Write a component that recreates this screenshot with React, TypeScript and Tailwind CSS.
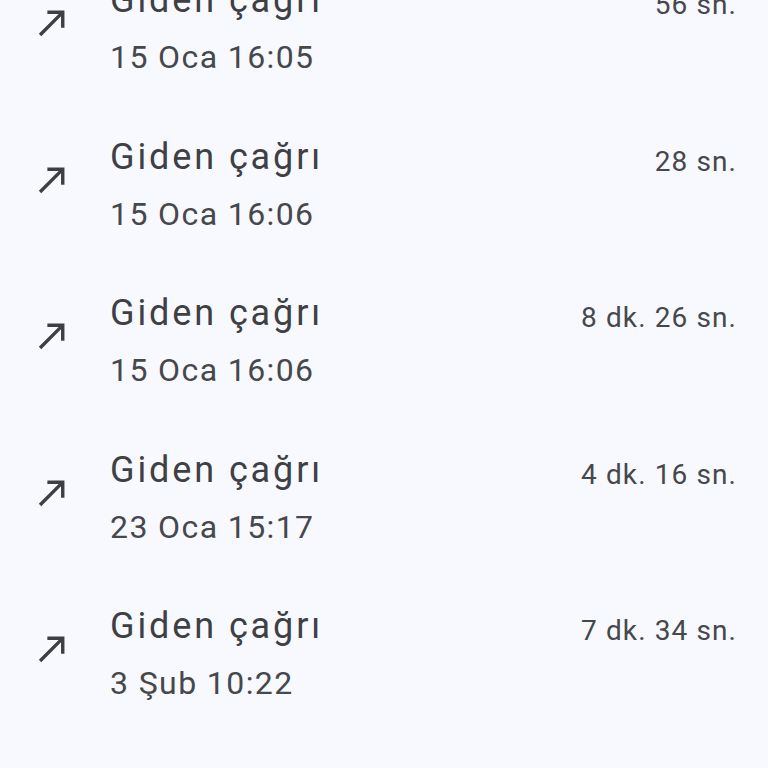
import React from "react";

const rows = [
  { date: "15 Oca 16:05", dur: "56 sn." },
  { date: "15 Oca 16:06", dur: "28 sn." },
  { date: "15 Oca 16:06", dur: "8 dk. 26 sn." },
  { date: "23 Oca 15:17", dur: "4 dk. 16 sn." },
  { date: "3 Şub 10:22", dur: "7 dk. 34 sn." },
];

function Arrow() {
  return (
    <svg width="41" height="41" viewBox="0 0 24 24" className="shrink-0 mt-[30px] ml-[32px]">
      <path d="M9 5v2h6.59L4 18.59 5.41 20 17 8.41V15h2V5z" fill="#3d3f43" />
    </svg>
  );
}

export default function App() {
  return (
    <div
      className="w-[768px] h-[768px] overflow-hidden bg-[#f8f9fe]"
      style={{ fontFamily: "Roboto, 'Noto Sans', sans-serif" }}
    >
      <div className="-mt-[49px] flex flex-col">
        {rows.map((r, i) => (
          <div key={i} className="h-[156.5px] shrink-0 flex items-start pt-[21px]">
            <Arrow />
            <div className="ml-[37px] flex-1 flex flex-col">
              <div className="text-[36px] leading-[57px] tracking-[2.9px] text-[#3e4044]">Giden çağrı</div>
              <div className="text-[32px] leading-[57px] tracking-[1.4px] text-[#46484c]">{r.date}</div>
            </div>
            <div className="mr-[31px] mt-[4px] text-[28px] leading-[57px] tracking-[1.1px] text-[#46484c] whitespace-nowrap">
              {r.dur}
            </div>
          </div>
        ))}
      </div>
    </div>
  );
}
